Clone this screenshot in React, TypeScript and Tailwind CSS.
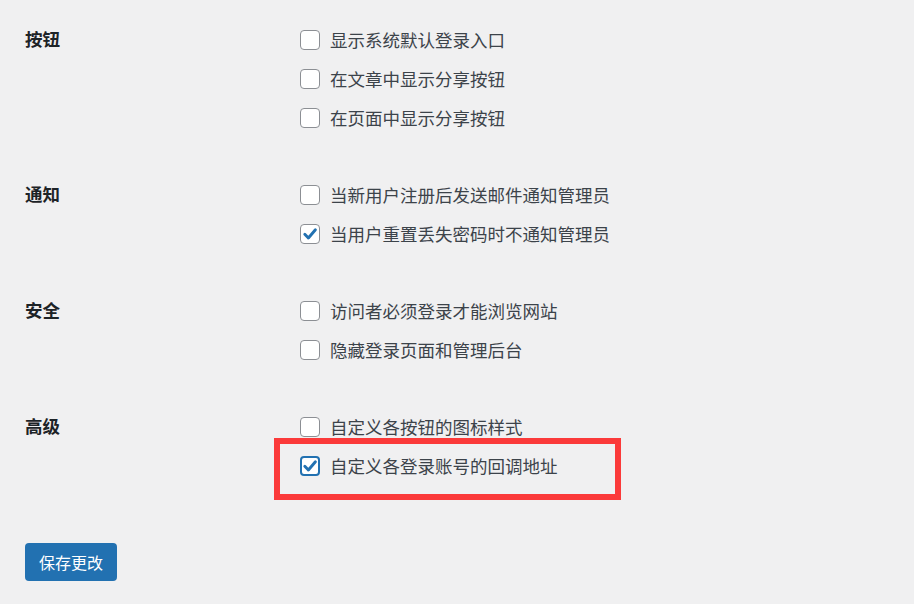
import React from 'react';

type Option = { label: string; checked?: boolean; focused?: boolean; highlight?: boolean };
type Section = { title: string; options: Option[] };

const sections: Section[] = [
  {
    title: '按钮',
    options: [{ label: '显示系统默认登录入口' }, { label: '在文章中显示分享按钮' }, { label: '在页面中显示分享按钮' }],
  },
  {
    title: '通知',
    options: [{ label: '当新用户注册后发送邮件通知管理员' }, { label: '当用户重置丢失密码时不通知管理员', checked: true }],
  },
  {
    title: '安全',
    options: [{ label: '访问者必须登录才能浏览网站' }, { label: '隐藏登录页面和管理后台' }],
  },
  {
    title: '高级',
    options: [
      { label: '自定义各按钮的图标样式' },
      { label: '自定义各登录账号的回调地址', checked: true, focused: true, highlight: true },
    ],
  },
];

const Checkbox = ({ checked, focused }: { checked?: boolean; focused?: boolean }) => (
  <span
    className={
      focused
        ? 'flex h-5 w-5 shrink-0 items-center justify-center rounded-[4px] border-2 border-[#2271b1] bg-white'
        : 'flex h-5 w-5 shrink-0 items-center justify-center rounded-[4px] border border-[#8c8f94] bg-white'
    }
  >
    {checked && (
      <svg width="16" height="16" viewBox="0 0 16 16">
        <path d="M2.8 8.2 L6.4 12 L13.4 3.8" fill="none" stroke="#2271b1" strokeWidth="2.9" strokeLinecap="round" strokeLinejoin="round" />
      </svg>
    )}
  </span>
);

export default function App() {
  return (
    <div
      className="min-h-[604px] bg-[#f0f0f1] pl-[25px] pt-5 text-[17.5px] text-[#3c434a]"
      style={{ fontFamily: '"Noto Sans CJK SC", "Noto Sans", sans-serif' }}
    >
      <div className="flex flex-col gap-[38px]">
        {sections.map(section => (
          <div key={section.title} className="flex">
            <div className="flex h-[39px] w-[275px] shrink-0 items-center font-semibold text-[#1d2327]">
              {section.title}
            </div>
            <div className="flex flex-col">
              {section.options.map(opt => (
                <div key={opt.label} className="relative flex h-[39px] items-center gap-[10px]">
                  <Checkbox checked={opt.checked} focused={opt.focused} />
                  <span className="leading-none">{opt.label}</span>
                  {opt.highlight && (
                    <div className="pointer-events-none absolute left-[-26px] top-[-8px] h-[62px] w-[347px] border-[6px] border-[#fb3a3a]" />
                  )}
                </div>
              ))}
            </div>
          </div>
        ))}
      </div>
      <button className="mt-[58px] h-[38px] rounded-[4px] bg-[#2271b1] px-[14px] text-[16px] text-white">
        保存更改
      </button>
    </div>
  );
}
